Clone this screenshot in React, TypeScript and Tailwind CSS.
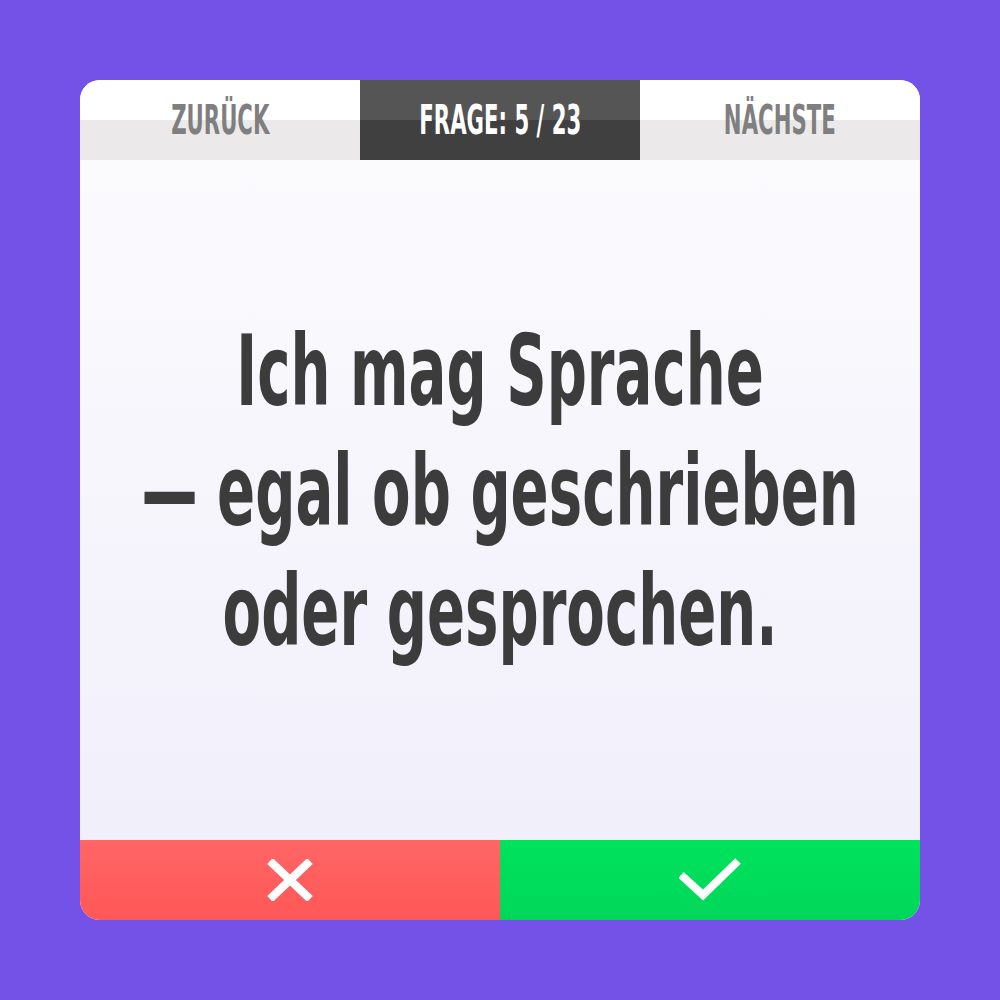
const font = { fontFamily: '"DejaVu Sans Condensed", "Liberation Sans Narrow", "Liberation Sans", sans-serif' }

function Cross() {
  return (
    <svg width="46" height="42" viewBox="0 0 46 42" fill="none" stroke="#ffffff" strokeWidth="8">
      <path d="M3 2 L43 40 M43 2 L3 40" />
    </svg>
  )
}

function Tick() {
  return (
    <svg width="62" height="44" viewBox="0 0 62 44" fill="none" stroke="#ffffff" strokeWidth="8" strokeLinejoin="miter">
      <path d="M2 17 L24 37 L59 3" />
    </svg>
  )
}

export default function App() {
  return (
    <div className="flex h-[1000px] w-[1000px] items-center justify-center bg-[#7452e8]" style={font}>
      <div className="flex h-[840px] w-[840px] flex-col overflow-hidden rounded-[20px] bg-white">
        {/* top nav */}
        <div className="grid h-20 grid-cols-[280px_280px_280px] bg-[linear-gradient(to_bottom,#ffffff_50%,#ebe9ea_50%)]">
          <button className="flex items-center justify-center text-[40px] font-bold text-[#7f7f7f]">
            <span className="inline-block scale-x-[0.59]">ZURÜCK</span>
          </button>
          <div className="flex items-center justify-center bg-[linear-gradient(to_bottom,#555555_50%,#404040_50%)] text-[40px] font-bold text-white">
            <span className="inline-block scale-x-[0.59] whitespace-nowrap">FRAGE: 5 / 23</span>
          </div>
          <button className="flex items-center justify-center text-[40px] font-bold text-[#7f7f7f]">
            <span className="inline-block scale-x-[0.59]">NÄCHSTE</span>
          </button>
        </div>

        {/* question */}
        <div className="flex flex-1 items-center justify-center bg-[linear-gradient(to_bottom,#fbfbfe,#f1effa)] pb-[18px]">
          <p className="scale-x-[0.637] text-center text-[98px] font-bold leading-[120px] text-[#3c3c3c] whitespace-nowrap">
            Ich mag Sprache
            <br />— egal ob geschrieben
            <br />oder gesprochen.
          </p>
        </div>

        {/* answer buttons */}
        <div className="grid h-20 grid-cols-2">
          <button className="flex items-center justify-center bg-[linear-gradient(to_bottom,#ff6666,#ff5757)]">
            <Cross />
          </button>
          <button className="flex items-center justify-center bg-[linear-gradient(to_bottom,#00e25c,#00d75a)]">
            <Tick />
          </button>
        </div>
      </div>
    </div>
  )
}
